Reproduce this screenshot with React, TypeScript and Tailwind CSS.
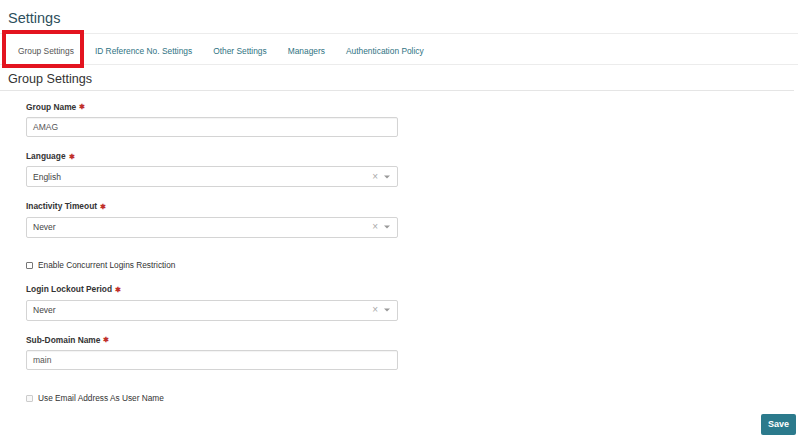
import React from 'react';

const tabs = ['Group Settings', 'ID Reference No. Settings', 'Other Settings', 'Managers', 'Authentication Policy'];

const Label = ({ text }: { text: string }) => (
  <label className="flex items-center gap-[3px] text-[8.4px] font-bold text-[#333] leading-none mb-[6px]">
    {text}
    <span className="text-[#c0302b] text-[7px] leading-none">&#10033;</span>
  </label>
);

const TextBox = ({ value }: { value: string }) => (
  <div className="h-[20px] w-[372px] rounded-[2px] border border-[#d4d4d4] flex items-center px-[6px] text-[8.5px] text-[#555] shadow-[inset_0_1px_1px_rgba(0,0,0,0.05)]">
    {value}
  </div>
);

const SelectBox = ({ value }: { value: string }) => (
  <div className="h-[21px] w-[372px] rounded-[2px] border border-[#d4d4d4] flex items-center px-[6px] text-[8.5px] text-[#444]">
    <span className="flex-1">{value}</span>
    <span className="text-[#aaa] text-[10px] leading-none mr-[6px]">×</span>
    <svg width="6" height="4" viewBox="0 0 6 4" className="mr-[1px]">
      <path d="M0 0.5h6L3 3.5z" fill="#999" />
    </svg>
  </div>
);

export default function App() {
  return (
    <div className="w-[798px] h-[440px] bg-white font-['Liberation_Sans',Arial,sans-serif] relative overflow-hidden">
      <h1 className="text-[14.5px] text-[#2d4f5c] leading-none pt-[11px] pl-[8px] h-[33px]">Settings</h1>
      <div className="border-t border-b border-[#ececec] h-[32px] flex items-center pt-[4px] pl-[18px] gap-[21px] text-[8.4px]">
        {tabs.map((t, i) => (
          <span key={t} className={i === 0 ? 'text-[#555]' : 'text-[#2f7383]'}>
            {t}
          </span>
        ))}
      </div>
      <div className="absolute left-[2px] top-[30px] w-[82px] h-[38px] border-[4px] border-[#e3141f]" />
      <h2 className="text-[12.6px] text-[#333] leading-none pl-[8px] pt-[8px] pb-[4px] mr-[4px] border-b border-[#e5e5e5]">Group Settings</h2>
      <div className="pl-[26px] pt-[12px] flex flex-col">
        <Label text="Group Name" />
        <TextBox value="AMAG" />
        <div className="h-[15px]" />
        <Label text="Language" />
        <SelectBox value="English" />
        <div className="h-[15px]" />
        <Label text="Inactivity Timeout" />
        <SelectBox value="Never" />
        <label className="flex items-center gap-[5px] text-[8.3px] text-[#333] mt-[21px] mb-[14px]">
          <span className="w-[7px] h-[7px] border border-[#777] rounded-[1px] bg-white" />
          Enable Concurrent Logins Restriction
        </label>
        <Label text="Login Lockout Period" />
        <SelectBox value="Never" />
        <div className="h-[15px]" />
        <Label text="Sub-Domain Name" />
        <TextBox value="main" />
        <label className="flex items-center gap-[5px] text-[8.3px] text-[#333] mt-[22px]">
          <span className="w-[7px] h-[7px] border border-[#ccc] rounded-[1px] bg-[#f8f8f8]" />
          Use Email Address As User Name
        </label>
      </div>
      <div className="absolute right-[2px] bottom-[5px]">
        <button className="h-[21px] px-[7px] rounded-[2px] bg-[#2b7a8c] text-white text-[9px] font-bold">Save</button>
      </div>
    </div>
  );
}
